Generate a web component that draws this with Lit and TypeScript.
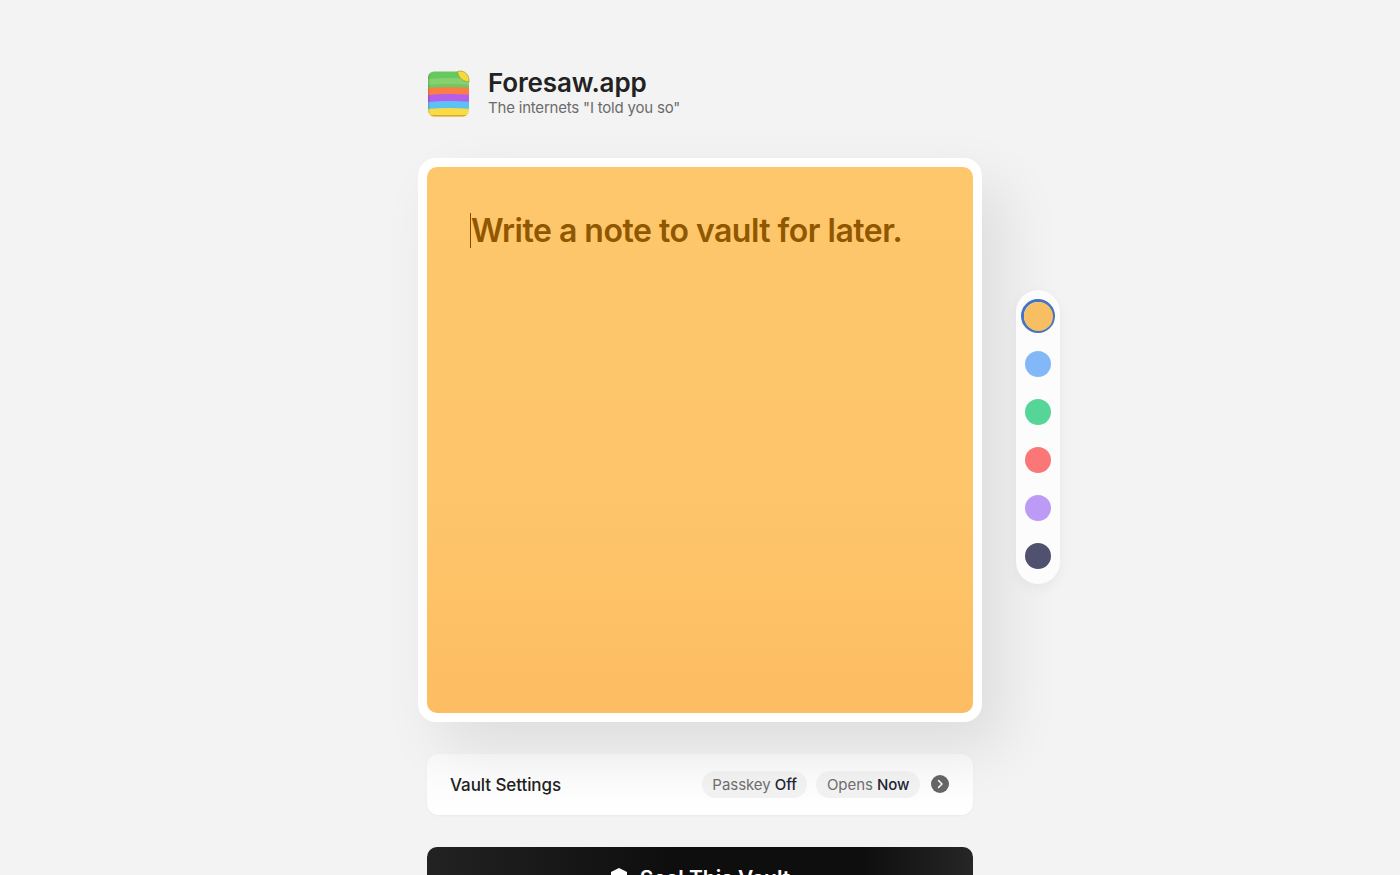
import { LitElement, html, css, svg } from "lit";
import { customElement, state } from "lit/decorators.js";
import { classMap } from "lit/directives/class-map.js";
import { styleMap } from "lit/directives/style-map.js";

const COLORS = ["#f8bf62", "#82b8f8", "#55d598", "#fb7676", "#bb9bf5", "#50506f"];

@customElement("app-root")
export class AppRoot extends LitElement {
  @state() selected = 0;

  static styles = css`
    :host {
      display: block;
      height: 875px;
      overflow: hidden;
      background: #f3f3f3;
      font-family: Inter, "Liberation Sans", sans-serif;
      color: #1f1f1f;
    }
    .page {
      width: 546px;
      margin: 0 auto;
      padding-top: 70px;
    }
    .header {
      display: flex;
      align-items: center;
      gap: 17px;
      height: 48px;
    }
    .logo { width: 44px; height: 48px; flex: none; display: block; }
    .titles { display: flex; flex-direction: column; margin-top: 1px; }
    .title { font-size: 26px; line-height: 27px; font-weight: 600; letter-spacing: -0.15px; color: #222; }
    .sub { font-size: 15px; line-height: 24px; color: #6b6b6b; letter-spacing: -0.2px; }
    .frame {
      position: relative;
      margin: 40px -9px 0;
      padding: 9px;
      background: #fff;
      border-radius: 18px;
      box-shadow: 22px 26px 60px rgba(0, 0, 0, 0.09);
    }
    .note {
      height: 546px;
      box-sizing: border-box;
      padding: 46px 43px;
      border-radius: 10px;
      background: linear-gradient(180deg, #fec76c 0%, #fec56a 60%, #fdbd62 100%);
    }
    .placeholder {
      border-left: 1px solid #7d4e00;
      height: 35px;
      line-height: 35px;
      font-size: 32px;
      font-weight: 600;
      letter-spacing: -0.5px;
      color: #905700;
      white-space: nowrap;
    }
    .palette {
      position: absolute;
      left: 598px;
      top: 132px;
      width: 44px;
      padding: 9px 0 11px;
      box-sizing: border-box;
      background: #fcfcfc;
      border-radius: 22px;
      display: flex;
      flex-direction: column;
      align-items: center;
      gap: 14px;
      box-shadow: 0 4px 14px rgba(0, 0, 0, 0.05);
    }
    .swatch {
      width: 34px;
      height: 34px;
      padding: 0;
      border: 0;
      border-radius: 50%;
      background: transparent;
      display: flex;
      align-items: center;
      justify-content: center;
    }
    .swatch span { width: 26px; height: 26px; border-radius: 50%; display: block; flex: none; }
    .swatch.on { box-sizing: border-box; border: 3px solid #4474c4; }
    .swatch.on span { width: 29px; height: 29px; }
    .settings {
      margin-top: 32px;
      height: 61px;
      box-sizing: border-box;
      padding: 0 24px 0 23px;
      display: flex;
      align-items: center;
      background: linear-gradient(180deg, #fafafa, #fff);
      border-radius: 12px;
      box-shadow: 0 1px 3px rgba(0, 0, 0, 0.04);
    }
    .settings .label { flex: 1; font-size: 17px; font-weight: 500; letter-spacing: -0.08px; color: #222; }
    .pill {
      height: 27px;
      line-height: 27px;
      padding: 0 10.5px;
      margin-right: 9px;
      border-radius: 14px;
      background: #f2f2f2;
      font-size: 15px;
      letter-spacing: -0.05px;
      color: #6f6f6f;
      white-space: nowrap;
    }
    .pill b { font-weight: 500; color: #1e2533; }
    .chev { width: 18px; height: 18px; margin: -1px 0 0 2px; display: block; }
    .seal {
      margin-top: 32px;
      height: 62px;
      width: 100%;
      padding: 0;
      border: 0;
      border-radius: 10px;
      background: linear-gradient(90deg, #222 0%, #0e0e0e 45%, #0e0e0e 80%, #262626 100%);
      color: #fff;
      font: 600 21px Inter, "Liberation Sans", sans-serif;
      display: flex;
      align-items: center;
      justify-content: center;
      gap: 12px;
    }
    .seal svg { width: 18px; height: 20px; display: block; }
  `;

  private logo() {
    const bands = [
      ["#66c95f", 0, 9], ["#86d06e", 8, 9], ["#6fc765", 14, 4], ["#f97f45", 17, 8],
      ["#b65dea", 24, 8], ["#5cc2f6", 31, 8], ["#f9dc45", 38, 10],
    ] as const;
    return html`<svg class="logo" viewBox="0 0 44 48" aria-hidden="true">
      <defs>
        <clipPath id="lc"><path d="M7 1.500H31L42 12V40a6 6 0 0 1-6 6.500H7a6 6 0 0 1-6-6V7a6 6 0 0 1 6-5.500Z" /></clipPath>
        <filter id="soft" x="-5%" y="-5%" width="110%" height="110%"><feGaussianBlur stdDeviation="0.35" /></filter>
      </defs>
      <g filter="url(#soft)">
        <g clip-path="url(#lc)">
          ${bands.map(([c, y, h]) => svg`<path d="M0 ${y + 1}Q22 ${y - 1} 44 ${y + 1}V${y + h + 1}Q22 ${y + h - 1} 0 ${y + h + 1}Z" fill=${c} />`)}
          <rect x="0" y="45" width="44" height="3" fill="#d8a92e" />
          <rect x="0" y="0" width="2.500" height="48" fill="#000" opacity=".12" />
        </g>
        <path d="M30.500 1.500c1 6 4.500 9.500 11.500 10.500C42.500 6 39 1 33 1Z" fill="#f5da3d" stroke="#9d9440" stroke-width=".7" />
      </g>
    </svg>`;
  }

  render() {
    return html`
      <div class="page">
        <header class="header">
          ${this.logo()}
          <div class="titles">
            <div class="title">Foresaw.app</div>
            <div class="sub">The internets "I told you so"</div>
          </div>
        </header>
        <div class="frame">
          <div class="note"><div class="placeholder">Write a note to vault for later.</div></div>
          <div class="palette">
            ${COLORS.map(
              (c, i) => html`<button
                class=${classMap({ swatch: true, on: i === this.selected })}
                aria-label="Colour ${i + 1}"
                @click=${() => (this.selected = i)}
              ><span style=${styleMap({ background: c })}></span></button>`
            )}
          </div>
        </div>
        <div class="settings">
          <div class="label">Vault Settings</div>
          <div class="pill">Passkey <b>Off</b></div>
          <div class="pill">Opens <b>Now</b></div>
          <svg class="chev" viewBox="0 0 18 18" aria-hidden="true">
            <circle cx="9" cy="9" r="9" fill="#666" />
            <path d="M7.500 5.500 11 9l-3.500 3.500" fill="none" stroke="#fff" stroke-width="1.500" stroke-linecap="round" stroke-linejoin="round" />
          </svg>
        </div>
        <button class="seal">
          <svg viewBox="0 0 18 20" aria-hidden="true"><path d="M9 0l8 4v6c0 5-3.500 8.500-8 10-4.500-1.500-8-5-8-10V4Z" fill="#fff" /></svg>
          Seal This Vault
        </button>
      </div>
    `;
  }
}
